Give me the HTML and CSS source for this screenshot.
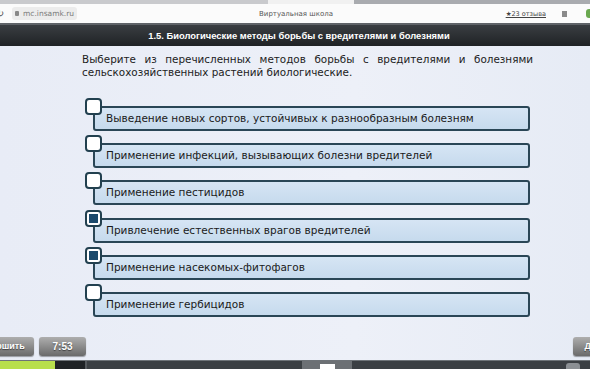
FILE: index.html
```html
<!DOCTYPE html>
<html lang="ru">
<head>
  <meta charset="UTF-8">
  <title>Виртуальная школа</title>
  <link rel="stylesheet" href="styles.css">
</head>
<body>

<div class="screen">

  <!-- browser tabs + address -->
  <div class="tabs">
    <span class="tab tab-left"></span>
    <span class="tab tab-active"></span>
    <span class="tab tab-right"></span>
  </div>
  <div class="addr">
    <div class="addr-left">
      <span class="reload">↻</span>
      <span class="url"><span class="lock"></span>mc.insamk.ru</span>
    </div>
    <div class="page-title">Виртуальная школа</div>
    <div class="addr-right">
      <span class="rating">★23 отзыва</span>
      <span class="bookmark"></span>
      <span class="ext"></span>
    </div>
  </div>

  <div class="titlebar">1.5. Биологические методы борьбы с вредителями и болезнями</div>

  <div class="content">
    <p class="question">Выберите из перечисленных методов борьбы с вредителями и болезнями сельскохозяйственных растений биологические.</p>

    <ul class="options">
      <li class="option"><span class="check"></span>Выведение новых сортов, устойчивых к разнообразным болезням</li>
      <li class="option"><span class="check"></span>Применение инфекций, вызывающих болезни вредителей</li>
      <li class="option"><span class="check"></span>Применение пестицидов</li>
      <li class="option"><span class="check checked"></span>Привлечение естественных врагов вредителей</li>
      <li class="option"><span class="check checked"></span>Применение насекомых-фитофагов</li>
      <li class="option"><span class="check"></span>Применение гербицидов</li>
    </ul>

    <div class="controls">
      <span class="btn btn-finish">Завершить</span>
      <span class="btn btn-time">7:53</span>
      <span class="btn btn-next">Далее</span>
    </div>
  </div>

  <div class="statusbar">
    <div class="progress"><span class="progress-fill"></span></div>
    <div class="pager"><span class="pager-mark"></span></div>
    <div class="status-icon"></div>
  </div>

</div>

</body>
</html>
```

FILE: styles.css
```css
html, body {
  margin: 0;
  padding: 0;
}
body {
  font-family: "DejaVu Sans", Verdana, sans-serif;
  background: #e9edf6;
}
.screen {
  width: 590px;
  height: 369px;
  overflow: hidden;
  display: flex;
  flex-direction: column;
}

/* browser tabs */
.tabs {
  height: 4px;
  display: flex;
  background: #b4b6ba;
}
.tab-left {
  width: 268px;
  background: #c9cacd;
}
.tab-active {
  width: 86px;
  background: #f1f1f1;
}
.tab-right {
  flex: 1;
  background: #a9abaf;
}

/* address bar */
.addr {
  height: 19px;
  background: #fbfbfb;
  border-bottom: 2px solid #5f6368;
  display: grid;
  grid-template-columns: 1fr auto 1fr;
  align-items: center;
  font-size: 7px;
  color: #666;
}
.addr-left {
  display: flex;
  align-items: center;
}
.reload {
  margin-left: -4px;
  font-size: 10px;
  color: #555;
  width: 16px;
}
.url {
  display: flex;
  align-items: center;
  gap: 4px;
  background: #ececec;
  border-radius: 3px;
  padding: 2px 3px;
  color: #7b7b7b;
  font-size: 7.5px;
}
.lock {
  width: 4px;
  height: 5px;
  background: #888;
  border-radius: 1px;
}
.page-title {
  color: #555;
  font-size: 7px;
  padding-left: 2px;
}
.addr-right {
  display: flex;
  align-items: center;
  justify-content: flex-end;
}
.rating {
  color: #444;
  font-size: 6.5px;
  text-decoration: underline;
  margin-right: 16px;
}
.bookmark {
  width: 5px;
  height: 6px;
  background: #8a8a8a;
  margin-right: 19px;
}
.ext {
  width: 8px;
  height: 9px;
  border-radius: 3px;
  background: #6aa84f;
  margin-right: -4px;
}

/* lesson title */
.titlebar {
  height: 21px;
  line-height: 21px;
  background: linear-gradient(#3a3e42, #1f2225);
  color: #fff;
  font-family: "Liberation Sans", Arial, sans-serif;
  font-weight: bold;
  font-size: 9.4px;
  text-align: center;
  padding-left: 8px;
}

/* question area */
.content {
  flex: 1;
  display: flex;
  flex-direction: column;
  background: linear-gradient(to right, #e8ecf6, #edf0f8 60%, #e6ebf5);
}
.question {
  margin: 0;
  padding: 7px 57px 0 82px;
  font-size: 10.4px;
  line-height: 13px;
  color: #1c1c1c;
  text-align: justify;
}
.options {
  list-style: none;
  margin: 27px 0 0 93px;
  padding: 0;
  width: 437px;
}
.option {
  position: relative;
  height: 25px;
  box-sizing: border-box;
  margin-bottom: 12.2px;
  padding-left: 11px;
  border: 2px solid #2a4656;
  border-radius: 3px;
  background: linear-gradient(#d6e5f4, #c6daed);
  font-size: 10.5px;
  line-height: 21px;
  color: #1a1a1a;
}
.check {
  position: absolute;
  left: -10px;
  top: -10px;
  width: 17px;
  height: 17px;
  box-sizing: border-box;
  border: 2px solid #22404f;
  border-radius: 4px;
  background: #fff;
}
.check.checked::after {
  content: "";
  position: absolute;
  left: 2px;
  top: 2px;
  width: 9px;
  height: 9px;
  background: #1c4a6c;
}

/* bottom buttons */
.controls {
  margin-top: auto;
  margin-bottom: 4px;
  display: flex;
  align-items: center;
  height: 19px;
}
.btn {
  height: 19px;
  line-height: 19px;
  box-sizing: border-box;
  border-radius: 3px;
  background: linear-gradient(#aeaeae, #6a6a6a);
  box-shadow: 0 1px 1px rgba(0, 0, 0, 0.35);
  color: #fff;
  font-family: "Liberation Sans", Arial, sans-serif;
  font-weight: bold;
  font-size: 9px;
  text-align: center;
  text-shadow: 0 1px 1px rgba(0, 0, 0, 0.5);
}
.btn-finish {
  width: 72px;
  margin-left: -38px;
  padding-left: 4px;
}
.btn-time {
  width: 47px;
  margin-left: 5px;
  font-size: 10px;
}
.btn-next {
  width: 50px;
  margin-left: auto;
  margin-right: -33px;
}

/* status bar */
.statusbar {
  height: 8px;
  background: #3b3f43;
  border-top: 1px solid #6e7378;
  display: flex;
  align-items: flex-start;
  position: relative;
}
.progress {
  width: 85px;
  height: 8px;
  margin-left: 0;
  background: #1f2225;
  border-right: 2px solid #55595d;
}
.progress-fill {
  display: block;
  width: 55px;
  height: 8px;
  background: #b8df4c;
}
.pager {
  width: 50px;
  height: 8px;
  margin-left: 215px;
  background: #6c7074;
  display: flex;
  justify-content: center;
}
.pager-mark {
  width: 15px;
  height: 6px;
  margin-top: 3px;
  background: #fff;
}
.status-icon {
  width: 14px;
  height: 6px;
  margin-left: auto;
  margin-right: 10px;
  margin-top: 2px;
  border-radius: 3px 3px 0 0;
  background: #8c9094;
}
```
